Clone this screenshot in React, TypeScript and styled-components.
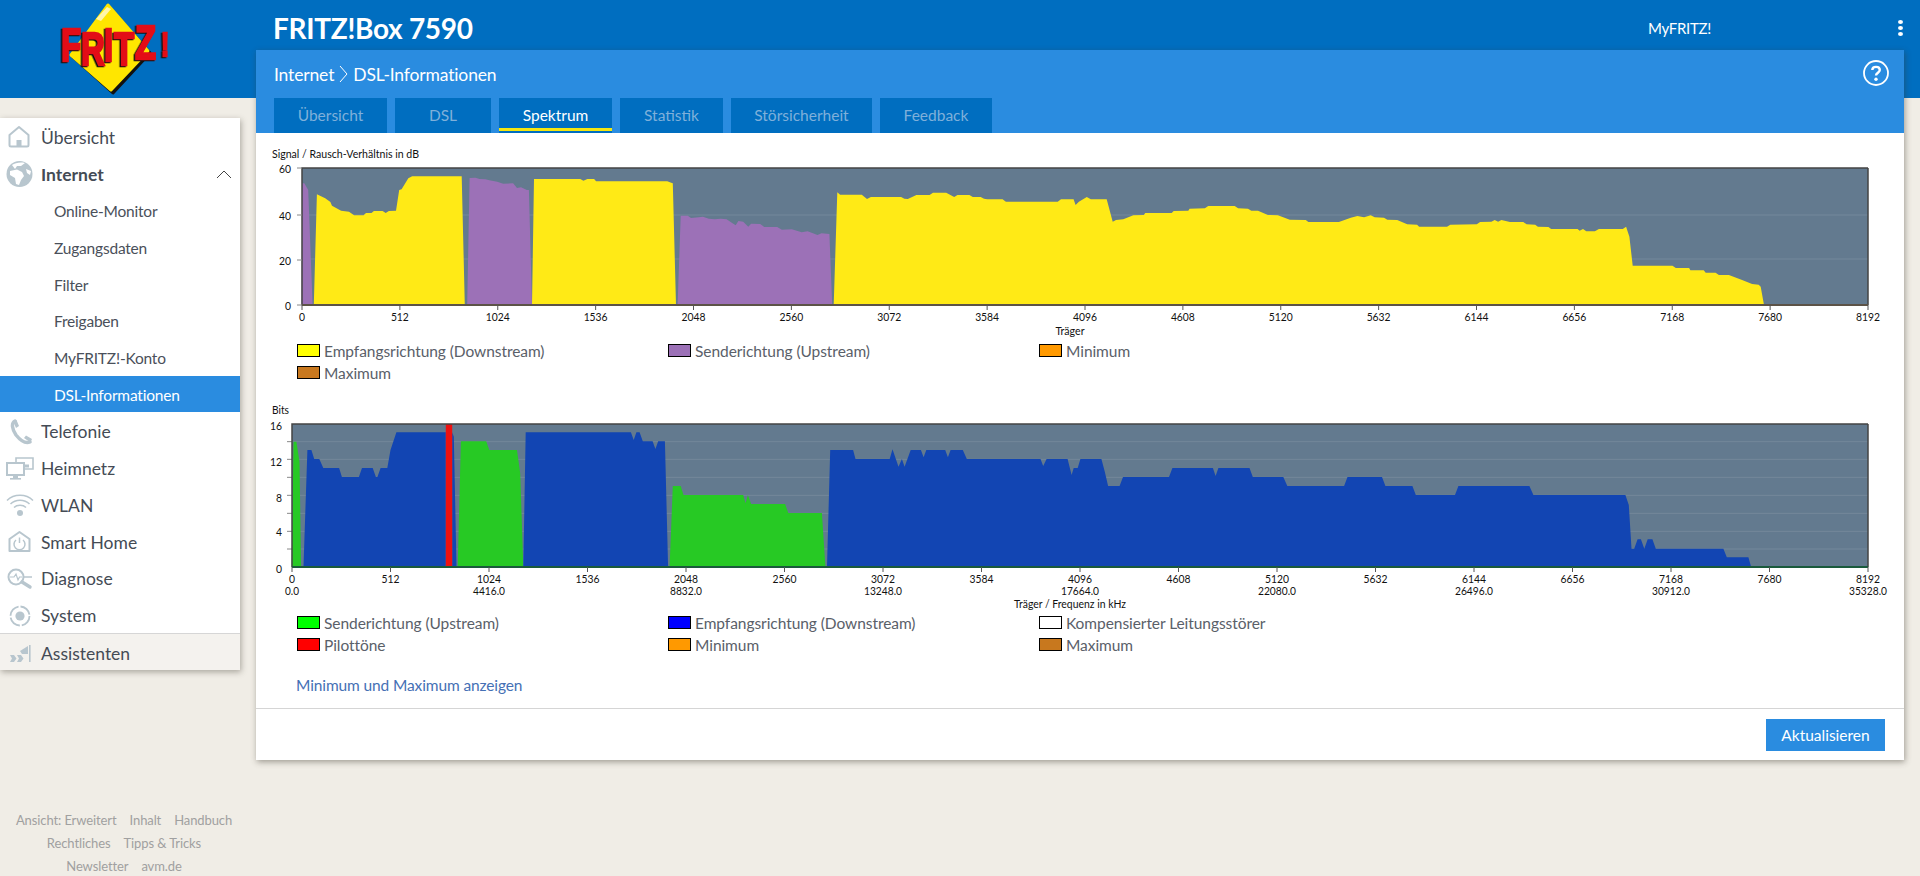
import React from "react";
import styled, { createGlobalStyle } from "styled-components";

const FONT = `Lato, "Noto Sans", sans-serif`;

const Global = createGlobalStyle`
  html, body { margin: 0; padding: 0; height: 876px; overflow: hidden; }
  body { background: #f0ede6; font-family: ${FONT}; color: #444; }
`;

const Shell = styled.div`
  display: grid;
  grid-template-columns: 256px 1664px;
  height: 876px;
  background: linear-gradient(#006ec0 98px, #f0ede6 98px);
`;

const SideColumn = styled.aside`
  display: flex;
  flex-direction: column;
`;

const LogoBar = styled.div`
  height: 98px;
  flex: none;
`;

const LogoSvg = styled.svg`
  display: block;
  width: 200px;
  height: 98px;
`;

const LogoLetters = styled.text`
  font-family: "Liberation Sans", sans-serif;
  font-weight: 700;
  font-size: 46px;
  fill: #e30d17;
  stroke: #e30d17;
  stroke-width: 2.4px;
  filter: drop-shadow(-1.5px 1.5px 0 #111);
`;

const Nav = styled.nav`
  width: 240px;
  margin-top: 20px;
  background: #fff;
  box-shadow: 1px 2px 6px rgba(60, 55, 45, 0.4);
`;

const NavRow = styled.div<{ $bold?: boolean }>`
  height: 36.8px;
  box-sizing: border-box;
  display: flex;
  align-items: center;
  gap: 7px;
  padding: 2px 8px 0 6px;
  font-size: 17.5px;
  font-weight: ${(p) => (p.$bold ? 700 : 400)};
  color: #444b55;
`;

const NavSub = styled.div<{ $active?: boolean }>`
  height: 36.8px;
  box-sizing: border-box;
  display: flex;
  align-items: center;
  padding: 2px 0 0 54px;
  font-size: 15.5px;
  letter-spacing: -0.2px;
  color: ${(p) => (p.$active ? "#fff" : "#4a505a")};
  background: ${(p) => (p.$active ? "#2a8ce0" : "transparent")};
`;

const NavFoot = styled(NavRow)`
  height: 37px;
  background: #f4f2ee;
  border-top: 1px solid #d6d6d6;
`;

const NavIcon = styled.svg`
  width: 28px;
  height: 28px;
  flex: none;
  color: #b8c6ce;
`;

const Chevron = styled.svg`
  width: 16px;
  height: 10px;
  margin-left: auto;
`;

const FooterLinks = styled.div`
  width: 248px;
  margin-top: 139px;
  text-align: center;
  font-size: 13px;
  letter-spacing: -0.1px;
  line-height: 23px;
  color: #a0a0a0;
`;

const FooterLink = styled.span`
  margin: 0 6.5px;
`;

const MainColumn = styled.main`
  display: flex;
  flex-direction: column;
`;

const TopBar = styled.header`
  height: 50px;
  box-sizing: border-box;
  flex: none;
  display: flex;
  align-items: center;
  padding: 6px 0 0 17px;
  color: #fff;
`;

const Product = styled.div`
  font-size: 28px;
  font-weight: 700;
  letter-spacing: -0.3px;
`;

const MyFritz = styled.div`
  margin-left: auto;
  margin-right: 187px;
  font-size: 15px;
  letter-spacing: -0.3px;
`;

const Kebab = styled.div`
  width: 5px;
  margin-right: 17px;
  display: flex;
  flex-direction: column;
  gap: 2px;
`;

const KebabDot = styled.span`
  width: 5px;
  height: 4px;
  border-radius: 50%;
  background: #fff;
`;

const Panel = styled.section`
  width: 1648px;
  background: #fff;
  box-shadow: 1px 2px 6px rgba(60, 55, 45, 0.45);
`;

const SubHead = styled.div`
  height: 83px;
  background: #2a8ce0;
  display: flex;
  flex-direction: column;
  padding: 0 18px;
  position: relative;
`;

const Crumbs = styled.div`
  height: 48px;
  display: flex;
  align-items: center;
  gap: 5px;
  font-size: 17.5px;
  letter-spacing: -0.15px;
  color: #fff;
`;

const HelpIcon = styled.svg`
  position: absolute;
  right: 15px;
  top: 10px;
  width: 26px;
  height: 26px;
`;

const Tabs = styled.div`
  display: flex;
  gap: 8px;
`;

const Tab = styled.div<{ $w: number; $active?: boolean }>`
  position: relative;
  width: ${(p) => p.$w}px;
  height: 35px;
  background: #006ec0;
  display: flex;
  align-items: center;
  justify-content: center;
  padding-bottom: 1px;
  box-sizing: border-box;
  font-size: 15.5px;
  color: ${(p) => (p.$active ? "#fff" : "#7fb0da")};
  &::after {
    content: "";
    display: ${(p) => (p.$active ? "block" : "none")};
    position: absolute;
    left: 0;
    right: 0;
    bottom: 2px;
    height: 3px;
    background: #f5e610;
  }
`;

const Body = styled.div`
  height: 575px;
  display: flex;
  flex-direction: column;
  padding-top: 7px;
  box-sizing: border-box;
`;

const ChartSvg = styled.svg<{ $gap?: number }>`
  display: block;
  flex: none;
  margin-top: ${(p) => p.$gap ?? 0}px;
`;

const ChartText = styled.text`
  font-family: ${FONT};
  font-size: 12px;
  fill: #111;
`;

const Legend = styled.div`
  display: grid;
  grid-template-columns: repeat(3, 371px);
  grid-auto-rows: 22px;
  padding-left: 41px;
`;

const LegendItem = styled.div`
  display: flex;
  align-items: center;
  gap: 4px;
  padding-top: 2px;
  box-sizing: border-box;
  font-size: 15.5px;
  letter-spacing: -0.06px;
  color: #5a6069;
`;

const Swatch = styled.span<{ $c: string }>`
  width: 23px;
  height: 13px;
  margin-top: -2px;
  flex: none;
  box-sizing: border-box;
  border: 1px solid #000;
  background: ${(p) => p.$c};
`;

const ToggleLink = styled.div`
  margin: 19px 0 0 40px;
  line-height: 22px;
  font-size: 15.5px;
  letter-spacing: -0.12px;
  color: #4570b5;
`;

const PanelFoot = styled.div`
  height: 52px;
  border-top: 1px solid #d5d5d5;
  box-sizing: border-box;
  display: flex;
  align-items: center;
  justify-content: flex-end;
  padding-right: 19px;
`;

const UpdateButton = styled.button`
  width: 119px;
  height: 32px;
  margin-top: 1px;
  border: 0;
  padding: 0;
  background: #2a8ce0;
  color: #fff;
  font-family: ${FONT};
  font-size: 15.5px;
`;

/* ---------- chart data: page coordinates derived from the reference ---------- */
type Pts = number[];
const ax = (x: number) => 260 + x / 2.529;
const bx = (x: number) => 860 + x / 1.5077;
const cx = (x: number) => 860 + x / 1.479;

const toPts = (mapX: (x: number) => number, y0: number, pts: Pts) => {
  const out: string[] = [];
  for (let i = 0; i < pts.length; i += 2) out.push(`${mapX(pts[i]).toFixed(1)},${(y0 + pts[i + 1] / 3).toFixed(1)}`);
  return out.join(" ");
};

const SNR_AREAS: { c: string; a?: Pts; b?: Pts }[] = [
  { c: "#9c71b7", a: [105,495,107,130,112,130,122,150,133,495] },
  { c: "#ffea16", a: [136,495,144,163,165,175,178,186,182,197,205,212,225,215,238,226,262,226,268,219,282,219,288,213,310,213,318,219,326,213,344,212,352,150,358,148,375,115,385,109,510,109,518,495] },
  { c: "#9c71b7", a: [524,495,530,114,545,113,555,117,570,118,580,121,590,123,600,125,615,131,640,130,650,144,660,142,675,150,680,150,688,495] },
  { c: "#ffea16", a: [688,495,693,117,810,117,818,122,828,117,845,117,850,124,1030,124,1040,128,1044,130,1052,495] },
  { c: "#9c71b7", a: [1056,495,1064,227,1082,227,1090,234,1110,232,1120,230,1135,236,1150,238,1165,236,1180,238,1195,250,1203,256,1210,243,1222,245,1235,260,1242,251,1265,252,1275,261,1308,261,1320,269,1345,268,1370,277,1385,274,1410,285,1420,280,1440,282,1447,495] },
  { c: "#ffea16", a: [1451,495,1460,157,1467,164,1522,164,1535,177,1545,171,1568,171],
    b: [30,171,62,171,67,176,72,177,85,165,105,165,110,158,130,158,142,171,147,165,165,165,170,171,182,171,187,176,192,178,215,178,220,185,298,185,303,178,322,178,325,195,330,185,342,171,348,178,372,178,381,245,386,240,397,238,412,226,428,225,430,219,470,219,473,213,495,212,497,206,520,205,525,198,565,198,570,205,585,206,590,212,600,212,615,225,630,226,648,239,672,240,676,246,722,246,740,233,750,228,760,232,770,226,776,232,790,233,795,239,810,240,825,253,840,254,843,260,885,260,890,254,930,253,935,246,952,245,957,240,962,245,967,240,980,246,1000,246,1005,253,1018,254,1022,260,1038,261,1042,267,1082,267,1085,272,1090,267,1095,274,1108,274,1114,267,1150,267,1155,260,1160,290,1165,377,1225,377,1230,384,1250,384,1252,391,1272,391,1275,398,1290,398,1295,405,1310,405,1330,420,1345,432,1355,434,1358,440,1363,495] },
];

const BIT_AREAS: { c: string; a?: Pts; b?: Pts }[] = [
  { c: "#27c924", a: [80,500,85,125,92,125,100,185,104,500] },
  { c: "#1245b3", a: [110,500,120,150,130,150,137,177,150,177,160,204,200,204,207,231,250,231,258,204,285,204,293,231,297,231,305,204,322,204,330,150,345,97,470,97,470,500] },
  { c: "#1245b3", a: [486,97,490,110,497,500,486,500] },
  { c: "#ee1111", a: [470,72,486,72,486,500,470,500] },
  { c: "#27c924", a: [500,500,508,124,572,124,580,150,650,150,658,220,666,500] },
  { c: "#1245b3", a: [666,500,672,97,938,97,945,120,952,97,960,97,968,124,993,124,1000,147,1007,124,1024,124,1032,500] },
  { c: "#27c924", a: [1036,500,1044,258,1064,258,1071,285,1222,285,1228,310,1234,285,1242,312,1328,312,1336,339,1421,339,1430,500] },
  { c: "#1245b3", a: [1434,500,1442,150,1500,150,1506,177,1568,177],
    b: [30,177,44,177,48,148,57,200,62,177,66,200,75,150,90,150,94,172,98,150,126,150,130,172,134,150,152,150,158,177,267,177,271,198,276,177,307,177,313,225,316,204,322,204,326,177,357,177,362,215,367,258,384,258,389,231,457,231,462,204,522,204,526,228,530,204,576,204,581,231,626,231,632,258,716,258,721,231,772,231,777,258,817,258,822,285,880,285,885,258,990,258,996,285,1132,285,1137,315,1141,446,1145,446,1150,418,1155,418,1160,446,1165,418,1172,418,1177,446,1277,446,1282,472,1314,472,1318,500] },
];

const carriers = Array.from({ length: 17 }, (_, i) => i * 512);

const Label: React.FC<{ x: number; y: number; w: number; anchor?: "start" | "middle" | "end"; children: React.ReactNode }> = ({ x, y, w, anchor = "middle", children }) => (
  <ChartText x={x} y={y + 4} textAnchor={anchor} textLength={w} lengthAdjust="spacingAndGlyphs">
    {children}
  </ChartText>
);

const numWidth = (s: string) => (s.replace(/\./g, "").length * 6 + (s.includes(".") ? 2 : 0));

const SnrChart = () => {
  const L = 302, R = 1868, T = 168, B = 305;
  const step = (R - L) / 16;
  return (
    <ChartSvg width={1648} height={199} viewBox="256 140 1648 199">
      <Label x={272} y={154} w={147} anchor="start">Signal / Rausch-Verhältnis in dB</Label>
      <rect x={L} y={T} width={R - L} height={B - T} fill="#637a8f" />
      {[215, 259].map((y) => <line key={y} x1={L} x2={R} y1={y} y2={y} stroke="#74889b" />)}
      {SNR_AREAS.map((s, i) => (
        <polygon key={i} fill={s.c} points={[s.a && toPts(ax, 140, s.a), s.b && toPts(bx, 140, s.b)].filter(Boolean).join(" ")} />
      ))}
      <path d={`M${R} ${T}V${B}M${L} ${B}V${T}H${R}`} fill="none" stroke="#444" strokeWidth={1.5} />
      <line x1={L} x2={R} y1={B} y2={B} stroke="#5c5347" strokeWidth={2} />
      {[[168, "60"], [215, "40"], [260, "20"], [305, "0"]].map(([y, t]) => (
        <g key={t as string}>
          <line x1={297} x2={L} y1={y as number} y2={y as number} stroke="#888" />
          <Label x={291} y={(y as number) + 0.5} w={(t as string).length * 6} anchor="end">{t}</Label>
        </g>
      ))}
      {carriers.map((c, i) => (
        <g key={c}>
          <line x1={L + i * step} x2={L + i * step} y1={B} y2={B + 5} stroke="#555" />
          <Label x={L + i * step} y={317} w={numWidth(String(c))}>{c}</Label>
        </g>
      ))}
      <Label x={1070} y={331} w={29}>Träger</Label>
    </ChartSvg>
  );
};

const BitsChart = () => {
  const L = 292, R = 1868, T = 424, B = 567;
  const step = (R - L) / 16;
  const yGrid = [125, 178, 232, 286, 340, 394, 447].map((z) => 400 + z / 3);
  return (
    <ChartSvg $gap={17} width={1648} height={211} viewBox="256 400 1648 211">
      <Label x={272} y={410} w={17} anchor="start">Bits</Label>
      <rect x={L} y={T} width={R - L} height={B - T} fill="#637a8f" />
      {yGrid.map((y) => (
        <g key={y}>
          <line x1={L} x2={R} y1={y} y2={y} stroke="#74889b" />
          <line x1={287} x2={L} y1={y} y2={y} stroke="#888" />
        </g>
      ))}
      {BIT_AREAS.map((s, i) => (
        <polygon key={i} fill={s.c} points={[s.a && toPts(ax, 400, s.a), s.b && toPts(cx, 400, s.b)].filter(Boolean).join(" ")} />
      ))}
      <path d={`M${R} ${T}V${B}M${L} ${B}V${T}H${R}`} fill="none" stroke="#444" strokeWidth={1.5} />
      <line x1={L} x2={R} y1={B} y2={B} stroke="#1a5a3c" strokeWidth={2} />
      {[[426, "16"], [462, "12"], [498, "8"], [532, "4"], [569, "0"]].map(([y, t]) => (
        <Label key={t as string} x={282} y={y as number} w={(t as string).length * 6} anchor="end">{t}</Label>
      ))}
      {carriers.map((c, i) => (
        <g key={c}>
          <line x1={L + i * step} x2={L + i * step} y1={B} y2={B + 5} stroke="#555" />
          <Label x={L + i * step} y={579} w={numWidth(String(c))}>{c}</Label>
          {i % 2 === 0 && (
            <Label x={L + i * step} y={591} w={numWidth((c * 4.3125).toFixed(1))}>{(c * 4.3125).toFixed(1)}</Label>
          )}
        </g>
      ))}
      <Label x={1070} y={604} w={112}>Träger / Frequenz in kHz</Label>
    </ChartSvg>
  );
};

/* ---------- icons ---------- */
const HomeIcon = () => (
  <NavIcon viewBox="0 0 28 28">
    <path d="M3.5 12 L13 4 L22.5 12 V22 a1.5 1.5 0 0 1-1.5 1.5 H5 a1.5 1.5 0 0 1-1.5-1.5 Z" fill="none" stroke="currentColor" strokeWidth="2" strokeLinejoin="round" />
    <rect x="10.5" y="17" width="5" height="6.5" fill="currentColor" />
  </NavIcon>
);
const GlobeIcon = () => (
  <NavIcon viewBox="0 0 28 28">
    <circle cx="13.5" cy="14" r="13" fill="currentColor" />
    <path d="M6 5 C9 3 14 2 19 3 L15 6 L11 6 L9 9 Z M4 11 L11 9.5 L16 12 L18 16 L15 20 L13 25 L10 24 L9 18 L4 15 Z M20 9 L25 11 L24 15 L21 13 Z" fill="#fff" />
  </NavIcon>
);
const PhoneIcon = () => (
  <NavIcon viewBox="0 0 28 28">
    <path d="M9 3 C5 5 6 11 10 17 C14 22 19 26 24 24" fill="none" stroke="currentColor" strokeWidth="3.4" strokeLinecap="round" />
    <path d="M7 3 L10.5 2 L13 8 L10 10 Z M18 20 L20 17.5 L26 21 L24.5 24.5 Z" fill="currentColor" />
  </NavIcon>
);
const NetIcon = () => (
  <NavIcon viewBox="0 0 28 28">
    <path d="M10 7.5 V3 H27 V14 H19" fill="none" stroke="currentColor" strokeWidth="1.6" />
    <rect x="1" y="8" width="17" height="12" fill="none" stroke="currentColor" strokeWidth="2" />
    <rect x="7" y="20" width="5" height="3" fill="currentColor" />
    <rect x="4" y="23" width="11" height="1.6" fill="currentColor" />
    <rect x="19" y="9.5" width="4" height="3" fill="currentColor" />
  </NavIcon>
);
const WifiIcon = () => (
  <NavIcon viewBox="0 0 28 28">
    <g fill="none" stroke="currentColor" strokeWidth="1.5">
      <path d="M1 9.5 C8 2.5 20 2.5 27 9.5" />
      <path d="M4.5 13 C9.5 8 18.5 8 23.5 13" />
      <path d="M8 16.5 C11 13.5 17 13.5 20 16.5" />
    </g>
    <circle cx="14" cy="22" r="3" fill="currentColor" />
  </NavIcon>
);
const SmartIcon = () => (
  <NavIcon viewBox="0 0 28 28">
    <path d="M3.5 11 L13.5 4 L23.5 11 V23 H3.5 Z" fill="none" stroke="currentColor" strokeWidth="2" strokeLinejoin="round" />
    <path d="M10 12 A5.5 5.5 0 1 0 17 12" fill="none" stroke="currentColor" strokeWidth="1.5" />
    <line x1="13.5" y1="9.5" x2="13.5" y2="15" stroke="currentColor" strokeWidth="1.5" />
  </NavIcon>
);
const DiagIcon = () => (
  <NavIcon viewBox="0 0 28 28">
    <circle cx="10" cy="12" r="7.5" fill="none" stroke="currentColor" strokeWidth="2" />
    <path d="M4 12 H8 L10 9 L12 15 L13.5 12 H16" fill="none" stroke="currentColor" strokeWidth="1.2" />
    <path d="M16 17 L24 22" stroke="currentColor" strokeWidth="3.4" strokeLinecap="round" />
    <path d="M18 12 H26" stroke="currentColor" strokeWidth="1.5" />
  </NavIcon>
);
const SystemIcon = () => (
  <NavIcon viewBox="0 0 28 28">
    <circle cx="14" cy="14" r="9.5" fill="none" stroke="currentColor" strokeWidth="1.8" strokeDasharray="13 2" />
    <circle cx="14" cy="14" r="4.6" fill="currentColor" />
  </NavIcon>
);
const WizardIcon = () => (
  <NavIcon viewBox="0 0 28 28">
    <path d="M4 16 H8 L10.5 19.5 L8 23 H4 L6 19.5 Z M11 16 H15 L17.5 19.5 L15 23 H11 L13 19.5 Z" fill="currentColor" />
    <path d="M14 12 L22 7 V15 H16 Z" fill="currentColor" />
    <rect x="23" y="6" width="1.6" height="17" fill="currentColor" />
  </NavIcon>
);

const LX = 0.72;
const Logo = () => (
  <LogoSvg viewBox="0 0 200 98">
    <path d="M108 6 L150 53 L113 93 L73 57 Z" fill="#111" stroke="#111" strokeWidth="3" strokeLinejoin="round" />
    <path d="M108 5 L148 51 L111 90 L71 55 Z" fill="#ffe600" stroke="#ffe600" strokeWidth="3" strokeLinejoin="round" />
    <path d="M107 7 L96 19 L101 21 L111 9 Z" fill="#fff6a8" />
    <LogoLetters transform={`scale(${LX} 1)`}>
      <tspan x={61 / LX} y="61">F</tspan>
      <tspan x={81 / LX} y="65">R</tspan>
      <tspan x={104 / LX} y="61">I</tspan>
      <tspan x={114 / LX} y="65">T</tspan>
      <tspan x={135 / LX} y="59" fontSize="48">Z</tspan>
      <tspan x={161 / LX} y="56" fontSize="34">!</tspan>
    </LogoLetters>
  </LogoSvg>
);

const subItems = ["Online-Monitor", "Zugangsdaten", "Filter", "Freigaben", "MyFRITZ!-Konto"];
const tabs: [string, number][] = [["Übersicht", 113], ["DSL", 96], ["Spektrum", 113], ["Statistik", 103], ["Störsicherheit", 141], ["Feedback", 112]];

export default function App() {
  return (
    <>
      <Global />
      <Shell>
        <SideColumn>
          <LogoBar><Logo /></LogoBar>
          <Nav>
            <NavRow><HomeIcon />Übersicht</NavRow>
            <NavRow $bold>
              <GlobeIcon />Internet
              <Chevron viewBox="0 0 16 10"><path d="M1 9 L8 2 L15 9" fill="none" stroke="#444" strokeWidth="1" /></Chevron>
            </NavRow>
            {subItems.map((s) => <NavSub key={s}>{s}</NavSub>)}
            <NavSub $active>DSL-Informationen</NavSub>
            <NavRow><PhoneIcon />Telefonie</NavRow>
            <NavRow><NetIcon />Heimnetz</NavRow>
            <NavRow><WifiIcon />WLAN</NavRow>
            <NavRow><SmartIcon />Smart Home</NavRow>
            <NavRow><DiagIcon />Diagnose</NavRow>
            <NavRow><SystemIcon />System</NavRow>
            <NavFoot><WizardIcon />Assistenten</NavFoot>
          </Nav>
          <FooterLinks>
            <div><FooterLink>Ansicht: Erweitert</FooterLink><FooterLink>Inhalt</FooterLink><FooterLink>Handbuch</FooterLink></div>
            <div><FooterLink>Rechtliches</FooterLink><FooterLink>Tipps &amp; Tricks</FooterLink></div>
            <div><FooterLink>Newsletter</FooterLink><FooterLink>avm.de</FooterLink></div>
          </FooterLinks>
        </SideColumn>
        <MainColumn>
          <TopBar>
            <Product>FRITZ!Box 7590</Product>
            <MyFritz>MyFRITZ!</MyFritz>
            <Kebab><KebabDot /><KebabDot /><KebabDot /></Kebab>
          </TopBar>
          <Panel>
            <SubHead>
              <Crumbs>
                Internet
                <svg width="9" height="18" viewBox="0 0 9 18"><path d="M1 1 L8 9 L1 17" fill="none" stroke="#fff" strokeWidth="1" /></svg>
                DSL-Informationen
              </Crumbs>
              <HelpIcon viewBox="0 0 26 26">
                <circle cx="13" cy="13" r="12" fill="none" stroke="#fff" strokeWidth="1.8" />
                <path d="M9.3 10 C9.3 5.8 16.8 5.8 16.8 10 C16.8 12.6 13 12.8 13 15.5" fill="none" stroke="#fff" strokeWidth="2.4" />
                <circle cx="13" cy="19.3" r="1.7" fill="#fff" />
              </HelpIcon>
              <Tabs>
                {tabs.map(([t, w]) => <Tab key={t} $w={w} $active={t === "Spektrum"}>{t}</Tab>)}
              </Tabs>
            </SubHead>
            <Body>
              <SnrChart />
              <Legend>
                <LegendItem><Swatch $c="#ffff00" />Empfangsrichtung (Downstream)</LegendItem>
                <LegendItem><Swatch $c="#9c71b7" />Senderichtung (Upstream)</LegendItem>
                <LegendItem><Swatch $c="#ff9900" />Minimum</LegendItem>
                <LegendItem><Swatch $c="#c8781e" />Maximum</LegendItem>
              </Legend>
              <BitsChart />
              <Legend>
                <LegendItem><Swatch $c="#00ff00" />Senderichtung (Upstream)</LegendItem>
                <LegendItem><Swatch $c="#0000ff" />Empfangsrichtung (Downstream)</LegendItem>
                <LegendItem><Swatch $c="#ffffff" />Kompensierter Leitungsstörer</LegendItem>
                <LegendItem><Swatch $c="#ff0000" />Pilottöne</LegendItem>
                <LegendItem><Swatch $c="#ff9900" />Minimum</LegendItem>
                <LegendItem><Swatch $c="#c8781e" />Maximum</LegendItem>
              </Legend>
              <ToggleLink>Minimum und Maximum anzeigen</ToggleLink>
            </Body>
            <PanelFoot><UpdateButton>Aktualisieren</UpdateButton></PanelFoot>
          </Panel>
        </MainColumn>
      </Shell>
    </>
  );
}
